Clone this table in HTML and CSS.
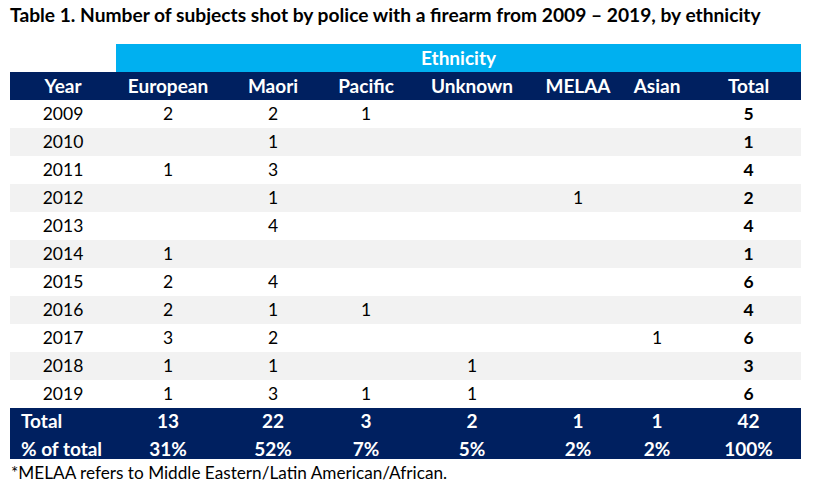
FILE: index.html
```html
<!DOCTYPE html>
<html lang="en">
<head>
<meta charset="utf-8">
<title>Table 1</title>
<link rel="stylesheet" href="styles.css">
</head>
<body>
<div class="page">
  <h1 class="title">Table 1. Number of subjects shot by police with a firearm from 2009 – 2019, by ethnicity</h1>
  <table class="data">
    <colgroup>
      <col class="c-year"><col class="c-eur"><col class="c-mao"><col class="c-pac"><col class="c-unk"><col class="c-mel"><col class="c-asi"><col class="c-tot">
    </colgroup>
    <thead>
      <tr class="band">
        <th class="blank"></th>
        <th class="eth" colspan="7">Ethnicity</th>
      </tr>
      <tr class="head">
        <th>Year</th><th>European</th><th>Maori</th><th>Pacific</th><th>Unknown</th><th>MELAA</th><th>Asian</th><th>Total</th>
      </tr>
    </thead>
    <tbody>
      <tr><td>2009</td><td>2</td><td>2</td><td>1</td><td></td><td></td><td></td><td class="tot">5</td></tr>
      <tr class="alt"><td>2010</td><td></td><td>1</td><td></td><td></td><td></td><td></td><td class="tot">1</td></tr>
      <tr><td>2011</td><td>1</td><td>3</td><td></td><td></td><td></td><td></td><td class="tot">4</td></tr>
      <tr class="alt"><td>2012</td><td></td><td>1</td><td></td><td></td><td>1</td><td></td><td class="tot">2</td></tr>
      <tr><td>2013</td><td></td><td>4</td><td></td><td></td><td></td><td></td><td class="tot">4</td></tr>
      <tr class="alt"><td>2014</td><td>1</td><td></td><td></td><td></td><td></td><td></td><td class="tot">1</td></tr>
      <tr><td>2015</td><td>2</td><td>4</td><td></td><td></td><td></td><td></td><td class="tot">6</td></tr>
      <tr class="alt"><td>2016</td><td>2</td><td>1</td><td>1</td><td></td><td></td><td></td><td class="tot">4</td></tr>
      <tr><td>2017</td><td>3</td><td>2</td><td></td><td></td><td></td><td>1</td><td class="tot">6</td></tr>
      <tr class="alt"><td>2018</td><td>1</td><td>1</td><td></td><td>1</td><td></td><td></td><td class="tot">3</td></tr>
      <tr><td>2019</td><td>1</td><td>3</td><td>1</td><td>1</td><td></td><td></td><td class="tot">6</td></tr>
    </tbody>
    <tfoot>
      <tr class="foot1"><th class="lbl">Total</th><td>13</td><td>22</td><td>3</td><td>2</td><td>1</td><td>1</td><td>42</td></tr>
      <tr class="foot2"><th class="lbl">% of total</th><td>31%</td><td>52%</td><td>7%</td><td>5%</td><td>2%</td><td>2%</td><td>100%</td></tr>
    </tfoot>
  </table>
  <p class="note">*MELAA refers to Middle Eastern/Latin American/African.</p>
</div>
</body>
</html>
```

FILE: styles.css
```css
html, body {
  margin: 0;
  padding: 0;
  background: #ffffff;
}

body {
  font-family: "Lato", "Liberation Sans", sans-serif;
  color: #000000;
}

.page {
  padding: 3px 0 0 10px;
}

.title {
  margin: 0;
  font-size: 19.2px;
  font-weight: 700;
  line-height: 24px;
  color: #000;
  white-space: nowrap;
}

.data {
  margin-top: 17px;
  border-collapse: collapse;
  table-layout: fixed;
  width: 791px;
  font-size: 19px;
}

.c-year { width: 106px; }
.c-eur { width: 104px; }
.c-mao { width: 106px; }
.c-pac { width: 80px; }
.c-unk { width: 132px; }
.c-mel { width: 80px; }
.c-asi { width: 78px; }
.c-tot { width: 105px; }

.data th,
.data td {
  padding: 0;
  text-align: center;
  vertical-align: middle;
  line-height: 20px;
}

.band th {
  height: 28px;
}

.band .blank {
  background: #ffffff;
}

.band .eth {
  background: #00b0f0;
  color: #ffffff;
  font-weight: 700;
}

.head th {
  height: 28px;
  background: #002060;
  color: #ffffff;
  font-weight: 700;
}

tbody td {
  height: 28px;
  padding-top: 4px;
  box-sizing: border-box;
  font-size: 17.5px;
}

tbody tr.alt td {
  background: #f2f2f2;
}

tbody td.tot {
  font-weight: 700;
}

tfoot tr th,
tfoot tr td {
  background: #002060;
  color: #ffffff;
  font-weight: 700;
  height: 25px;
  padding-top: 4px;
  box-sizing: border-box;
}

tfoot .foot2 th,
tfoot .foot2 td {
  height: 26px;
  padding-top: 6px;
}

tfoot th.lbl {
  text-align: left;
  padding-left: 11px;
}

.note {
  margin: 2px 0 0;
  padding-left: 1px;
  font-size: 17.2px;
  line-height: 24px;
}
```
